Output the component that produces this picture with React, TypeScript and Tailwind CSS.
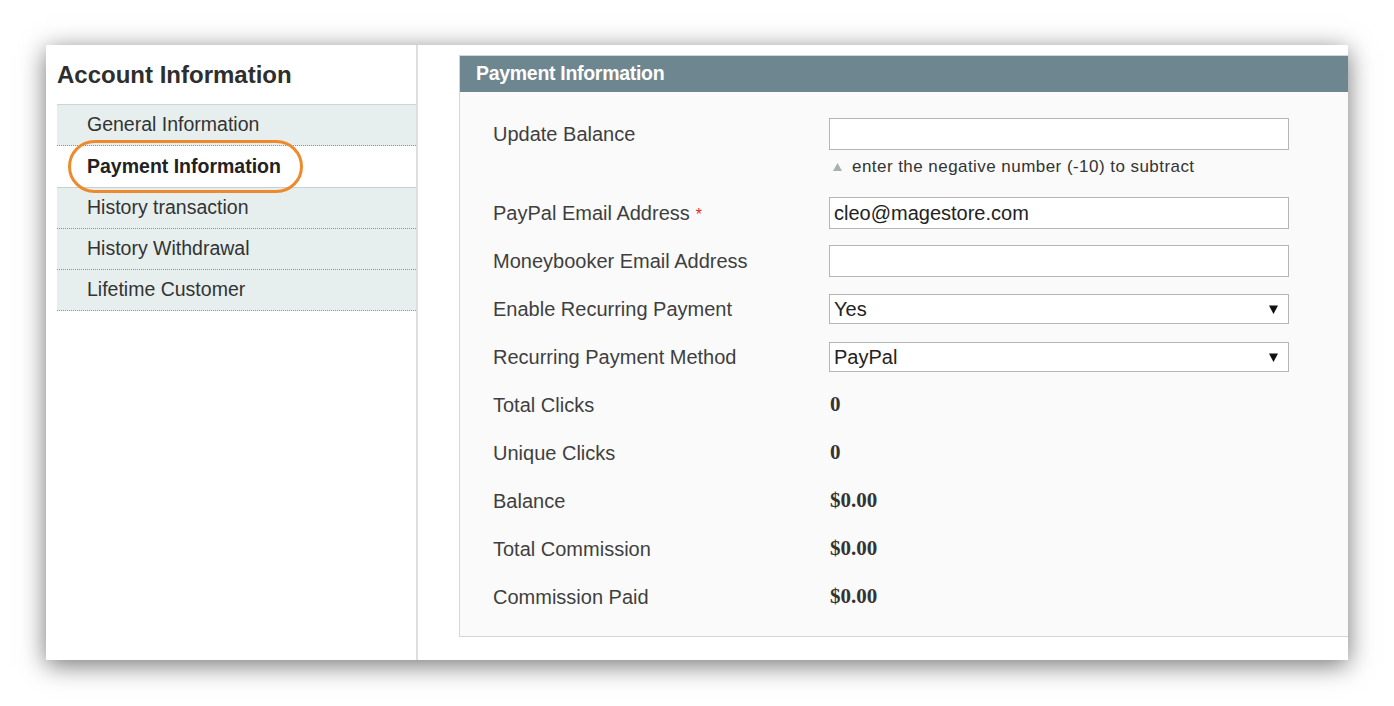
import React from "react";

const tabs = [
	{ label: "General Information", active: false },
	{ label: "Payment Information", active: true },
	{ label: "History transaction", active: false },
	{ label: "History Withdrawal", active: false },
	{ label: "Lifetime Customer", active: false },
];

function TextInput({ value }: { value?: string }) {
	return (
		<div className="w-[460px] h-[32px] border border-[#b5b5b5] bg-white px-[4px] flex items-center text-[20px] text-[#222]">
			{value}
		</div>
	);
}

function SelectBox({ value }: { value: string }) {
	return (
		<div className="w-[460px] h-[30px] border border-[#b5b5b5] bg-white pl-[4px] pr-[10px] flex items-center justify-between text-[20px] text-[#222]">
			<span>{value}</span>
			<svg width="9" height="9" viewBox="0 0 9 9">
				<path d="M0 0.5 H9 L4.5 9 Z" fill="#111" />
			</svg>
		</div>
	);
}

function Row({ label, children, required }: { label: string; children: React.ReactNode; required?: boolean }) {
	return (
		<div className="h-[48px] flex items-center">
			<div className="w-[336px] text-[20px] text-[#3f3f3f]">
				{label}
				{required ? <span className="text-[#e22626] text-[16px] ml-[6px]">*</span> : null}
			</div>
			{children}
		</div>
	);
}

function Value({ children }: { children: React.ReactNode }) {
	return (
		<div className="pl-[1px] font-['Liberation_Serif','Times_New_Roman',serif] font-bold text-[21px] text-[#333]">
			{children}
		</div>
	);
}

export default function App() {
	return (
		<div className="w-[1394px] h-[706px] bg-white pt-[45px] pl-[46px] font-['Liberation_Sans',Arial,sans-serif]">
			<div className="w-[1302px] h-[615px] bg-white overflow-hidden flex shadow-[0_5px_24px_rgba(0,0,0,0.55)]">
				<div className="w-[372px] shrink-0 pl-[11px] pt-[16px] border-r-2 border-[#dedede]">
					<div className="text-[24px] leading-[28px] font-bold text-[#2e2e2e]">Account Information</div>
					<div className="mt-[15px] border-t border-[#cfd6d6]">
						{tabs.map((t) =>
							t.active ? (
								<div
									key={t.label}
									className="relative h-[42px] bg-white border-b border-[#c9d0d0] pl-[30px] flex items-center text-[19.5px] font-bold text-[#222]"
								>
									{t.label}
									<div className="absolute left-[11px] top-[-6px] w-[235px] h-[53px] rounded-full border-[3px] border-[#ef8a2c]"></div>
								</div>
							) : (
								<div
									key={t.label}
									className="h-[41px] bg-[#e6eeee] border-b border-dotted border-[#8a9696] pl-[30px] flex items-center text-[19.5px] text-[#333]"
								>
									{t.label}
								</div>
							)
						)}
					</div>
				</div>
				<div className="flex-1 pl-[41px] pt-[10px] overflow-hidden">
					<div className="w-[960px] border border-[#d5d5d5] bg-[#fafafa]">
						<div className="h-[36px] bg-[#6e868f] pl-[16px] flex items-center text-[19.5px] font-bold text-white tracking-[-0.3px]">
							Payment Information
						</div>
						<div className="pl-[33px] pt-[26px] pb-[15px]">
							<div className="h-[71px] flex items-start">
								<div className="w-[336px] h-[32px] flex items-center text-[20px] text-[#3f3f3f]">
									Update Balance
								</div>
								<div>
									<TextInput />
									<div className="mt-[4px] pl-[4px] flex items-center text-[17px] tracking-[0.45px] text-[#333]">
										<svg width="9" height="8" viewBox="0 0 9 8" className="mr-[10px]">
											<path d="M4.5 0 L9 8 H0 Z" fill="#a7b1b1" />
										</svg>
										enter the negative number (-10) to subtract
									</div>
								</div>
							</div>
							<Row label="PayPal Email Address" required>
								<TextInput value="cleo@magestore.com" />
							</Row>
							<Row label="Moneybooker Email Address">
								<TextInput />
							</Row>
							<Row label="Enable Recurring Payment">
								<SelectBox value="Yes" />
							</Row>
							<Row label="Recurring Payment Method">
								<SelectBox value="PayPal" />
							</Row>
							<Row label="Total Clicks">
								<Value>0</Value>
							</Row>
							<Row label="Unique Clicks">
								<Value>0</Value>
							</Row>
							<Row label="Balance">
								<Value>$0.00</Value>
							</Row>
							<Row label="Total Commission">
								<Value>$0.00</Value>
							</Row>
							<Row label="Commission Paid">
								<Value>$0.00</Value>
							</Row>
						</div>
					</div>
				</div>
			</div>
		</div>
	);
}
